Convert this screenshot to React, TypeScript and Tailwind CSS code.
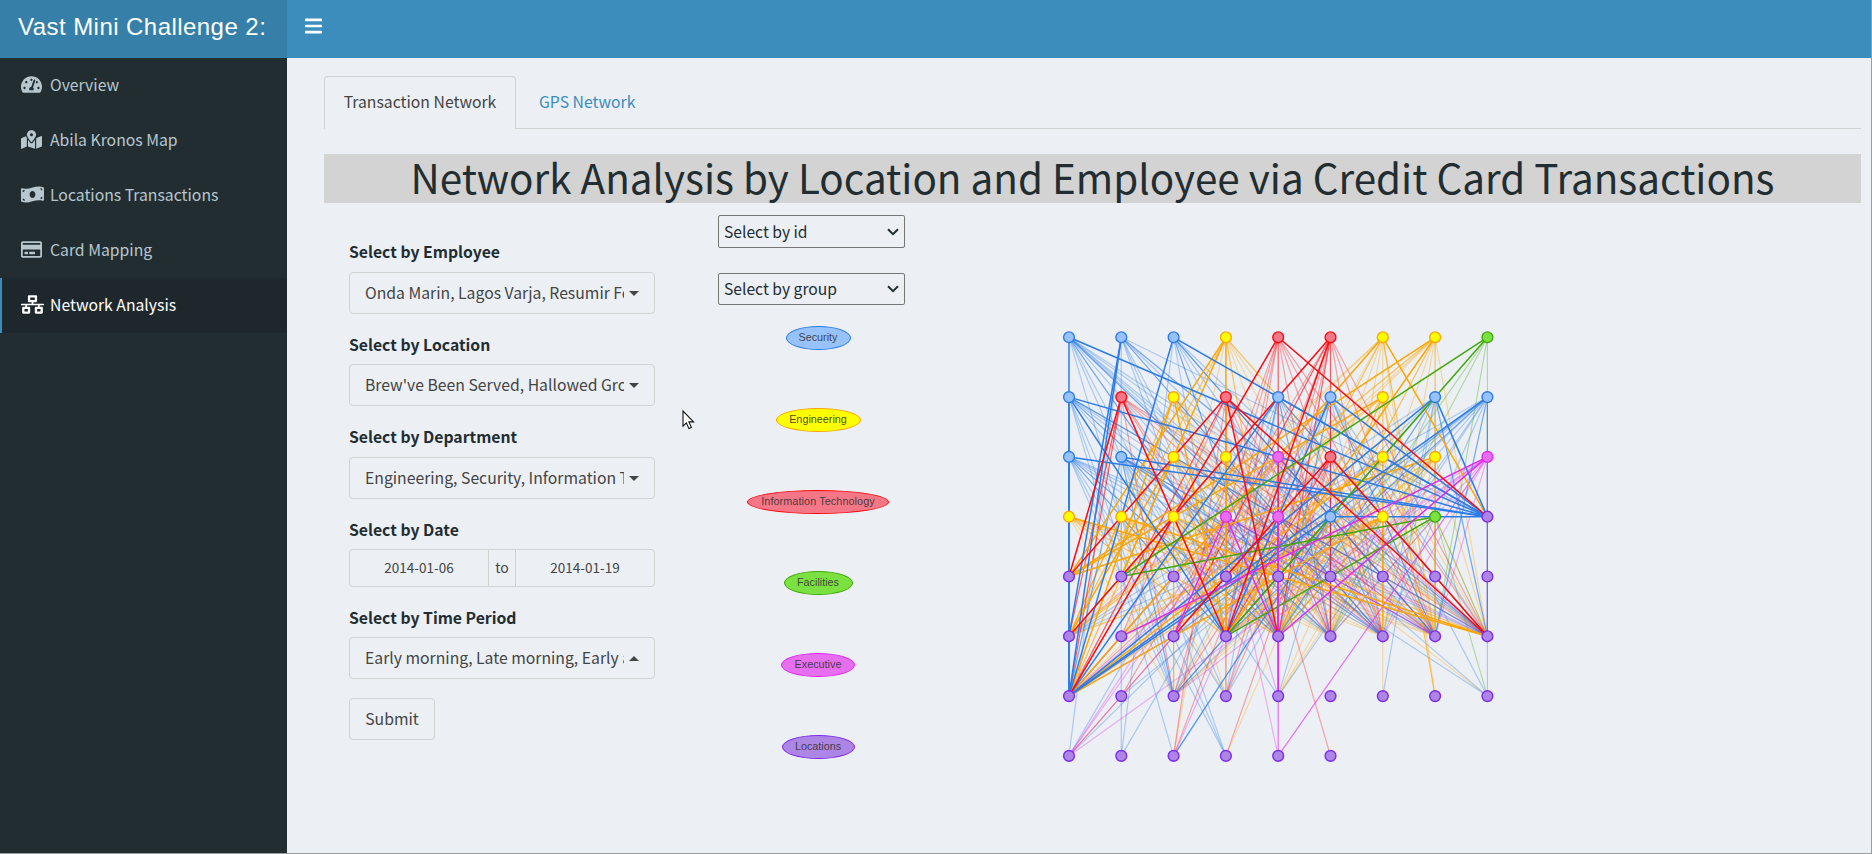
import React from "react";
import {
  FaBars,
  FaMapMarkedAlt,
  FaMoneyBillWave,
  FaNetworkWired,
  FaRegCreditCard,
  FaTachometerAlt,
} from "react-icons/fa";

const NAV = [
  { label: "Overview", icon: <FaTachometerAlt className="h-[21px] w-[21px]" /> },
  { label: "Abila Kronos Map", icon: <FaMapMarkedAlt className="h-[19px] w-[21px]" /> },
  { label: "Locations Transactions", icon: <FaMoneyBillWave className="h-[23px] w-[23px]" /> },
  { label: "Card Mapping", icon: <FaRegCreditCard className="h-[21px] w-[21px]" /> },
  { label: "Network Analysis", icon: <FaNetworkWired className="h-[23px] w-[23px]" />, active: true },
];

type Group = "B" | "Y" | "R" | "G" | "M" | "P";

const COLORS: Record<Group, { fill: string; stroke: string }> = {
  B: { fill: "#97c2fc", stroke: "#2b7ce9" },
  Y: { fill: "#ffff00", stroke: "#ffa500" },
  R: { fill: "#f57687", stroke: "#fa0a10" },
  G: { fill: "#7be141", stroke: "#41a906" },
  M: { fill: "#e76eee", stroke: "#e129f0" },
  P: { fill: "#ad85e4", stroke: "#7c29f0" },
};

const ROWS = [
  "BBBYRRYYG",
  "BRYRBBYBB",
  "BBYYMRYYM",
  "YYYMMBYGP",
  "PPPPPPPPP",
  "PPPPPPPPP",
  "PPPPPPPPP",
  "PPPPPP",
];

const groupOf = (cell: string) => ROWS[Number(cell[0])][Number(cell[1])] as Group;

/* Each entry: employee cell, frequent, regular and occasional location cells. */
const LINKS: [string, string, string, string][] = [
  ["00", "60 38", "54 56", "53 55 57 58 63 45 62 47 68"],
  ["01", "60 50", "56 58", "38 53 54 57 70 43 71"],
  ["02", "60 38", "54 57", "53 55 56 58 71 46"],
  ["03", "40 53 41", "50 54", "55 56 57 58 42 47"],
  ["04", "60 38", "54", "53 55 56 57 58 43 52 62"],
  ["05", "50 53", "52 54 55", "56 57 58 61 63 72 44"],
  ["06", "60 38", "53 57", "50 54 55 56 67 41 62"],
  ["07", "40 53", "50 54 57", "55 56 58 60 42"],
  ["08", "41 53", "", "54 55 58 57"],
  ["10", "60 38 53", "55 58", "54 56 57 72 73 62 46"],
  ["11", "40 53", "60 50", "54 56 57 58 62 43"],
  ["12", "60 53", "54 50", "41 55 56 57 58 62 44"],
  ["13", "40 58 54", "53 60", "51 55 56 57 72 75 63"],
  ["14", "38 60", "53 55 58", "54 56 57 64 62 70 63"],
  ["15", "38 53", "55 54 57", "56 58 60 62 63 68 71"],
  ["16", "40", "50 53 54 67", "55 56 57 58 73 42"],
  ["17", "38 60", "53 54 58", "55 56 57 66 62 50 70"],
  ["18", "60", "53 52 57 58", "54 55 56 62 68 50 61 64"],
  ["20", "60 38", "54 53", "55 56 57 58 62 63 73"],
  ["21", "38", "60 56 57 62", "53 54 55 58 73 68 64 45"],
  ["22", "50", "60 53 54", "55 56 57 58 42 41 68"],
  ["23", "53", "50 41 54", "55 56 57 58 63 51 44 72"],
  ["24", "", "54 60", "53 55 56 57 58 64 50 70 52"],
  ["25", "52 58", "53", "54 55 56 57 60 62 63 70 73"],
  ["26", "60", "51 53 54", "55 56 57 58 46 62 64"],
  ["27", "40", "53 60 54 57", "55 56 58 62 41 64"],
  ["28", "51 54", "74 58", "60 53 55 56 57 70 62"],
  ["30", "58", "54 53", "55 56 57 41 43 62"],
  ["31", "58", "50 41 54", "53 55 56 57 63 44"],
  ["32", "53", "50 54 58 62", "55 56 57 60 63"],
  ["33", "52 54", "57", "53 55 56 58 60 64 70 74"],
  ["34", "64", "74 54", "53 55 56 57 58 60 70 72"],
  ["35", "38 60", "55 53 62 72", "54 56 57 58 64 63 50 72"],
  ["36", "60", "50 53 56 51", "54 55 57 58 62 64 66"],
  ["37", "41 53", "", "54 55 58 68"],
];

const DRAW_ORDER = "YBGMR";
const SORTED = [...LINKS].sort((a, b) => DRAW_ORDER.indexOf(groupOf(a[0])) - DRAW_ORDER.indexOf(groupOf(b[0])));

const px = (cell: string) => 19 + 52.3 * Number(cell[1]);
const py = (cell: string) => 17.3 + 59.8 * Number(cell[0]);

const TIERS = [
  { width: 1.2, opacity: 0.34 },
  { width: 1.2, opacity: 0.64 },
  { width: 1.5, opacity: 1 },
];

function TransactionGraph() {
  return (
    <svg className="block h-[456px] w-[460px]" viewBox="0 0 460 456">
      {TIERS.map((tier, t) =>
        SORTED.map((link) => {
          const from = link[0];
          return link[3 - t]
            .split(" ")
            .filter(Boolean)
            .map((to) => (
              <line
                key={from + to}
                x1={px(from)}
                y1={py(from)}
                x2={px(to)}
                y2={py(to)}
                stroke={COLORS[groupOf(from)].stroke}
                strokeWidth={tier.width}
                strokeOpacity={tier.opacity}
              />
            ));
        })
      )}
      {ROWS.map((row, r) =>
        row.split("").map((g, c) => {
          const cell = `${r}${c}`;
          const color = COLORS[g as Group];
          return (
            <circle key={cell} cx={px(cell)} cy={py(cell)} r={5.4} fill={color.fill} stroke={color.stroke} strokeWidth={1.4} />
          );
        })
      )}
    </svg>
  );
}

function Legend() {
  const item = "flex h-6 items-center justify-center rounded-[50%] border pb-[1px]";
  return (
    <div className="mt-[6px] flex h-[433px] w-[200px] flex-col items-center justify-between font-['Liberation_Sans',sans-serif] text-[10.8px] leading-none text-[#343434]/90">
      <div className={`${item} w-[65px] border-[#2b7ce9] bg-[#97c2fc]`}>Security</div>
      <div className={`${item} w-[85px] border-[#ffa500] bg-[#ffff00]`}>Engineering</div>
      <div className={`${item} w-[142px] border-[#fa0a10] bg-[#f57687]`}><span className="tracking-[0.1px]">Information Technology</span></div>
      <div className={`${item} w-[69px] border-[#41a906] bg-[#7be141]`}>Facilities</div>
      <div className={`${item} w-[74px] border-[#e129f0] bg-[#e76eee]`}>Executive</div>
      <div className={`${item} w-[73px] border-[#7c29f0] bg-[#ad85e4]`}>Locations</div>
    </div>
  );
}

function Label({ children }: { children: React.ReactNode }) {
  return <div className="h-[25px] text-[15.75px] font-bold leading-[26px] text-[#222d32]">{children}</div>;
}

function Picker({ text, up = false }: { text: string; up?: boolean }) {
  return (
    <div className="flex h-[42px] w-[306px] items-center rounded-[4px] border border-[#d2d2d2] pl-[15px] pr-[15px] text-[#444]">
      <span className="w-[259px] overflow-hidden whitespace-nowrap pb-[1px] text-[15.75px] leading-[29px]">{text}</span>
      <svg className="ml-[5px] h-[5px] w-[10px] shrink-0" viewBox="0 0 10 5">
        <path d={up ? "M0 5 5 0l5 5z" : "M0 0h10L5 5z"} fill="#444" />
      </svg>
    </div>
  );
}

function NativeSelect({ text, className }: { text: string; className: string }) {
  return (
    <div className={`flex w-[187px] items-center justify-between rounded-[2px] border border-[#767676] pl-[5px] pr-[5px] text-[15.65px] text-[#222d32] ${className}`}>
      <span className="leading-[24px]">{text}</span>
      <svg className="h-[8px] w-[12px]" viewBox="0 0 12 8">
        <path d="M1 1.2 6 6.2l5-5" fill="none" stroke="#222d32" strokeWidth="2" />
      </svg>
    </div>
  );
}

export default function App() {
  return (
    <div className="relative flex h-[854px] w-[1872px] flex-col overflow-hidden border-b border-r border-[#9b9da0] bg-[#ecf0f5] font-['Noto_Sans_CJK_SC','Noto_Sans',sans-serif] text-[#222d32]">
      <header className="flex h-[58px] shrink-0 bg-[#3c8dbc] text-white">
        <div className="flex w-[287px] items-center bg-[#367fa9] pb-[5px] pl-[18px] font-['Liberation_Sans',sans-serif] text-[24px] tracking-[0.45px] whitespace-nowrap">
          Vast Mini Challenge 2:
        </div>
        <div className="flex items-center pb-[6px] pl-[18px]">
          <FaBars className="h-[20px] w-[17px]" />
        </div>
      </header>
      <div className="flex min-h-0 flex-1">
        <aside className="w-[287px] shrink-0 bg-[#222d32]">
          {NAV.map((item) => (
            <div
              key={item.label}
              className={
                item.active
                  ? "flex h-[55px] items-center border-l-2 border-[#3c8dbc] bg-[#1e282c] pl-[19px] text-white"
                  : "flex h-[55px] items-center border-l-2 border-transparent pl-[19px] text-[#b8c7ce]"
              }
            >
              <span className="flex w-[29px] items-center pb-[2px]">{item.icon}</span>
              <span className="pb-[2px] text-[15.75px] leading-[24px] whitespace-nowrap">{item.label}</span>
            </div>
          ))}
        </aside>
        <main className="flex min-w-0 flex-1 flex-col pl-[37px] pr-[10px] pt-[18px]">
          <nav className="flex h-[53px] text-[15.75px]">
            <div className="flex w-[192px] items-center justify-center rounded-t-[4px] border border-b-0 border-[#d2d2d2] pb-[2px] text-[#444]">
              Transaction Network
            </div>
            <div className="flex flex-1 items-center border-b border-[#d2d2d2] pl-[23px] text-[#3c8dbc]">
              GPS Network
            </div>
          </nav>
          <h1 className="mt-[25px] flex h-[49px] items-center justify-center bg-[#d3d3d3] pb-[4px] text-[40.4px] leading-[45px] whitespace-nowrap">
            Network Analysis by Location and Employee via Credit Card Transactions
          </h1>
          <div className="flex flex-1">
            <section className="w-[394px] pl-[25px] pt-[36px]">
              <Label>Select by Employee</Label>
              <div className="h-[8px]" />
              <Picker text="Onda Marin, Lagos Varja, Resumir Felix" />
              <div className="h-[18px]" />
              <Label>Select by Location</Label>
              <div className="h-[7px]" />
              <Picker text="Brew've Been Served, Hallowed Grounds" />
              <div className="h-[18px]" />
              <Label>Select by Department</Label>
              <div className="h-[8px]" />
              <Picker text="Engineering, Security, Information Technology" />
              <div className="h-[18px]" />
              <Label>Select by Date</Label>
              <div className="h-[7px]" />
              <div className="flex h-[38px] w-[306px] rounded-[4px] border border-[#d2d2d2] text-center text-[13.5px] leading-[35px] text-[#444]">
                <div className="flex-1">2014-01-06</div>
                <div className="w-[28px] border-x border-[#d2d2d2] text-[14px]">to</div>
                <div className="flex-1">2014-01-19</div>
              </div>
              <div className="h-[18px]" />
              <Label>Select by Time Period</Label>
              <div className="h-[7px]" />
              <Picker text="Early morning, Late morning, Early afternoon" up />
              <button className="mt-[19px] flex h-[42px] w-[86px] items-center justify-center rounded-[4px] border border-[#d2d2d2] text-[15.75px] text-[#444]">
                Submit
              </button>
            </section>
            <section className="flex flex-col pt-[12px]">
              <NativeSelect text="Select by id" className="h-[33px]" />
              <NativeSelect text="Select by group" className="mt-[25px] h-[32px]" />
              <div className="mt-[15px] flex">
                <Legend />
                <div className="ml-[132px]">
                  <TransactionGraph />
                </div>
              </div>
            </section>
          </div>
        </main>
      </div>
      <svg className="absolute left-[682px] top-[410px] h-[20px] w-[13px]" viewBox="0 0 13 20">
        <path d="M1 1v15.2l3.4-3.3 2.5 5.7 2.5-1.1-2.5-5.6h4.7z" fill="#fff" stroke="#111" strokeWidth="1.1" />
      </svg>
    </div>
  );
}
